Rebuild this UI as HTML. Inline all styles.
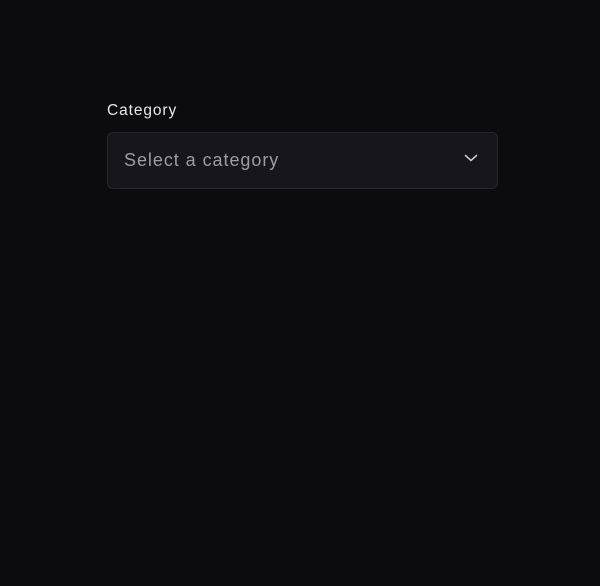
<!DOCTYPE html>
<html><head><style>
html,body{margin:0;background:#0c0b0e;width:600px;height:586px;overflow:hidden;font-family:"Liberation Sans",sans-serif}
.l{position:absolute;left:107px;top:102px;font-size:15.5px;color:#e8e8ec;letter-spacing:0.9px}
.b{position:absolute;left:107px;top:132px;width:389px;height:55px;border:1px solid #27262c;border-radius:6px;background:#17161b}
.p{position:absolute;left:16px;top:17px;font-size:18px;color:#9d9ca4;letter-spacing:0.95px}
svg{position:absolute;left:356px;top:20px}
</style></head><body>
<div class="l">Category</div>
<div class="b"><div class="p">Select a category</div>
<svg width="14" height="10" viewBox="0 0 14 10"><path d="M1.5 2.5 L7 7.5 L12.5 2.5" fill="none" stroke="#c8c8cc" stroke-width="1.6" stroke-linecap="round" stroke-linejoin="round"/></svg></div>
</body></html>
